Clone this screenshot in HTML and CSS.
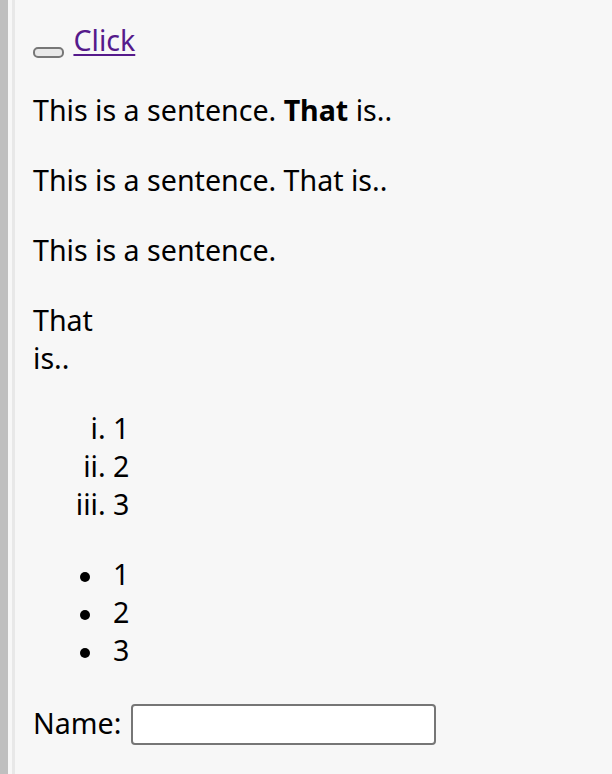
FILE: index.html
```html
<!DOCTYPE html>
<html>
<head>
<meta charset="utf-8">
<link rel="stylesheet" href="styles.css">
</head>
<body>
<div class="page">
  <div class="inner">
    <div class="top"><button class="empty-btn" type="button"></button> <a class="link" href="#">Click</a></div>
    <p class="para">This is a sentence. <b>That</b> is..</p>
    <p class="para">This is a sentence. That is..</p>
    <p class="para">This is a sentence.</p>
    <p class="para">That<br>is..</p>
    <ol class="roman">
      <li>1</li>
      <li>2</li>
      <li>3</li>
    </ol>
    <ul class="bullets">
      <li>1</li>
      <li>2</li>
      <li>3</li>
    </ul>
    <form class="form"><label class="label">Name:</label> <input class="field" type="text"></form>
  </div>
</div>
</body>
</html>
```
FILE: styles.css
```css
html, body {
  margin: 0;
  padding: 0;
  background: #f7f7f7;
}
body {
  font-family: "Noto Sans", "Open Sans", sans-serif;
  font-size: 28.6px;
  line-height: 38px;
  color: #000;
}
.page {
  border-left: 8px solid #bfbfbf;
  padding-left: 4px;
  min-height: 774px;
  box-sizing: border-box;
}
.inner {
  border-left: 3px solid #e8e8e8;
  padding-left: 18px;
  padding-top: 21px;
  min-height: 774px;
  box-sizing: border-box;
}
.top {
  height: 38px;
}
.empty-btn {
  width: 31px;
  height: 11px;
  padding: 0;
  border: 2px solid #777;
  border-radius: 5px;
  background: #e9e9e9;
  vertical-align: -5px;
  box-sizing: border-box;
  margin: 0 2px 0 0;
}
.link {
  color: #551a8b;
  text-decoration: underline;
  text-decoration-thickness: 2px;
  text-underline-offset: 3px;
}
.para {
  margin: 32px 0;
}
.roman, .bullets {
  margin: 32px 0;
  padding-left: 80px;
}
.roman {
  list-style-type: lower-roman;
}
.bullets {
  list-style: none;
}
.bullets li::before {
  content: "";
  display: inline-block;
  width: 10px;
  height: 10px;
  border-radius: 50%;
  background: #000;
  margin-left: -33px;
  margin-right: 23px;
  vertical-align: middle;
}
.form {
  margin: 0;
  display: flex;
  align-items: center;
  gap: 10px;
}
.label {
  line-height: 38px;
}
.field {
  width: 305px;
  height: 41px;
  box-sizing: border-box;
  border: 2px solid #767676;
  border-radius: 4px;
  background: #fff;
  margin: 3px 0 0 0;
  padding: 0 4px;
  font-size: 26px;
}
```
